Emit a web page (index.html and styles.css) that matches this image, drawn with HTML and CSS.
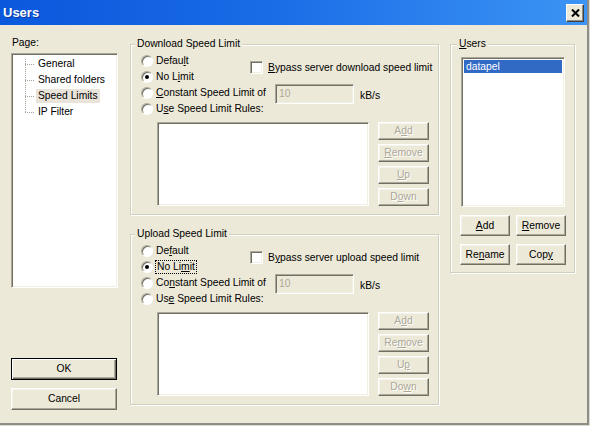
FILE: index.html
```html
<!DOCTYPE html>
<html>
<head>
<meta charset="utf-8">
<link rel="stylesheet" href="styles.css">
</head>
<body>
<div class="window">
  <div class="titlebar">
    <span class="title">Users</span>
    <span class="close"><svg width="9" height="8" viewBox="0 0 9 8"><path d="M1 0.5 L8 7.5 M8 0.5 L1 7.5" stroke="#000" stroke-width="2" fill="none"/></svg></span>
  </div>
  <div class="client">
    <div class="col-left">
      <div class="page-label">Page:</div>
      <div class="tree sunken">
        <div class="tree-inner">
          <svg class="tree-lines" width="11" height="64" viewBox="0 0 11 64" shape-rendering="crispEdges">
            <path d="M0.5 3 V56.5 M0 8.5 H9 M0 24.5 H9 M0 40.5 H9 M0 56.5 H9" stroke="#a3a39a" stroke-width="1" stroke-dasharray="1 1" fill="none"/>
          </svg>
          <ul class="tree-items">
            <li><span>General</span></li>
            <li><span>Shared folders</span></li>
            <li><span class="sel">Speed Limits</span></li>
            <li><span>IP Filter</span></li>
          </ul>
        </div>
      </div>
      <button class="btn btn-default btn-wide">OK</button>
      <button class="btn btn-wide btn-cancel">Cancel</button>
    </div>

    <div class="col-mid">
      <fieldset class="group">
        <legend>Download Speed Limit</legend>
        <div class="opts">
          <label class="radio-row r1"><span class="radio"></span><span>Defau<u>l</u>t</span></label>
          <label class="check-row"><span class="checkbox"></span><span><u>B</u>ypass server download speed limit</span></label>
          <label class="radio-row r2"><span class="radio on"></span><span>No L<u>i</u>mit</span></label>
          <label class="radio-row r3"><span class="radio"></span><span><u>C</u>onstant Speed Limit of</span></label>
          <span class="edit sunken">10</span>
          <span class="unit">kB/s</span>
          <label class="radio-row r4"><span class="radio"></span><span>U<u>s</u>e Speed Limit Rules:</span></label>
        </div>
        <div class="rules">
          <div class="rule-list sunken"></div>
          <div class="rule-btns">
            <button class="btn small" disabled>A<u>d</u>d</button>
            <button class="btn small" disabled><u>R</u>emove</button>
            <button class="btn small" disabled><u>U</u>p</button>
            <button class="btn small" disabled>D<u>o</u>wn</button>
          </div>
        </div>
      </fieldset>

      <fieldset class="group group-up">
        <legend>Upload Speed Limit</legend>
        <div class="opts">
          <label class="radio-row r1"><span class="radio"></span><span>De<u>f</u>ault</span></label>
          <label class="check-row"><span class="checkbox"></span><span>B<u>y</u>pass server upload speed limit</span></label>
          <label class="radio-row r2"><span class="radio on"></span><span class="focus">No Li<u>m</u>it</span></label>
          <label class="radio-row r3"><span class="radio"></span><span>Co<u>n</u>stant Speed Limit of</span></label>
          <span class="edit sunken">10</span>
          <span class="unit">kB/s</span>
          <label class="radio-row r4"><span class="radio"></span><span>Us<u>e</u> Speed Limit Rules:</span></label>
        </div>
        <div class="rules">
          <div class="rule-list sunken"></div>
          <div class="rule-btns">
            <button class="btn small" disabled>A<u>d</u>d</button>
            <button class="btn small" disabled>Re<u>m</u>ove</button>
            <button class="btn small" disabled>U<u>p</u></button>
            <button class="btn small" disabled>Do<u>w</u>n</button>
          </div>
        </div>
      </fieldset>
    </div>

    <div class="col-right">
      <fieldset class="group group-users">
        <legend><u>U</u>sers</legend>
        <div class="users-body">
          <div class="user-list sunken">
            <div class="user-item">datapel</div>
          </div>
          <div class="user-btns">
            <button class="btn"><u>A</u>dd</button>
            <button class="btn"><u>R</u>emove</button>
            <button class="btn">Re<u>n</u>ame</button>
            <button class="btn">Cop<u>y</u></button>
          </div>
        </div>
      </fieldset>
    </div>
  </div>
</div>
</body>
</html>
```

FILE: styles.css
```css
* { box-sizing: border-box; }
html, body { margin: 0; padding: 0; }
body {
  width: 590px;
  height: 426px;
  overflow: hidden;
  background: #ece9d8;
  font-family: "Liberation Sans", Arial, sans-serif;
  font-size: 10.3px;
  color: #000;
}
.window {
  width: 590px;
  height: 426px;
  background: #ece9d8;
  border-right: 1px solid #dddbd1;
  border-bottom: 1px solid #dddbd1;
  box-shadow: inset -2px -2px 0 #8f8e86;
  padding: 0 2px 2px 0;
  display: flex;
  flex-direction: column;
}
.titlebar {
  height: 25px;
  flex: none;
  display: flex;
  align-items: center;
  justify-content: space-between;
  padding: 0 3px 0 3px;
  background: linear-gradient(to right, #0a58dc 0%, #1a6be6 45%, #3c94f4 100%);
}
.title {
  color: #fff;
  font-weight: bold;
  font-size: 13px;
  text-shadow: 1px 1px 0 #0b3a9e;
}
.close {
  width: 18px;
  height: 18px;
  background: #ece9d8;
  border: 1px solid;
  border-color: #fff #404040 #404040 #fff;
  box-shadow: inset -1px -1px 0 #8f8e86;
  display: flex;
  align-items: center;
  justify-content: center;
}
.client {
  flex: 1;
  display: flex;
  padding-left: 11px;
}
.sunken {
  background: #fff;
  border: 1px solid;
  border-color: #aca899 #fff #fff #aca899;
  box-shadow: inset 1px 1px 0 #716f64, inset -1px -1px 0 #f1efe2;
}

/* left column */
.col-left {
  width: 107px;
  padding-top: 12px;
  display: flex;
  flex-direction: column;
}
.page-label { line-height: 12px; height: 12px; margin-bottom: 4px; padding-left: 1px; }
.tree { height: 235px; padding: 2px 0 0 2px; }
.tree-inner { display: flex; align-items: flex-start; padding-left: 11px; }
.tree-lines { flex: none; margin-top: 0; }
.tree-items { list-style: none; margin: 0; padding: 0; }
.tree-items li { height: 16px; display: flex; align-items: center; }
.tree-items li span { padding: 1px 2px; line-height: 12px; white-space: nowrap; }
.tree-items li span.sel { background: #e9e3da; }

.btn {
  font-family: inherit;
  font-size: 10.3px;
  color: #000;
  background: #ece9d8;
  border: 1px solid;
  border-color: #fff #716f64 #716f64 #fff;
  box-shadow: inset -1px -1px 0 #aca899, inset 1px 1px 0 #f6f4ea;
  padding: 0;
  margin: 0;
  border-radius: 0;
  line-height: 12px;
}
.btn:disabled {
  color: #aca899;
  text-shadow: 1px 1px 0 #fff;
}
.btn-wide { width: 106px; height: 22px; }
.btn-default {
  margin-top: 70px;
  border-color: #000;
  box-shadow: inset 1px 1px 0 #fff, inset -1px -1px 0 #716f64, inset -2px -2px 0 #aca899;
}
.btn-cancel { margin-top: 8px; }

/* middle column */
.col-mid {
  width: 309px;
  margin-left: 12px;
  padding-top: 13px;
  display: flex;
  flex-direction: column;
}
.group {
  margin: 0;
  padding: 3px 0 8px 4px;
  border: 1px solid #d0d0bf;
  box-shadow: inset 1px 1px 0 #fff, 1px 1px 0 #fff;
  min-width: 0;
}
.group legend {
  padding: 0 2px;
  line-height: 12px;
  background: #ece9d8;
}
.group-up { margin-top: 13px; }
.opts {
  margin-left: 6px;
  display: grid;
  grid-template-columns: 109px 25px 79px 1fr;
  grid-template-rows: repeat(4, 16px);
}
.radio-row {
  display: flex;
  align-items: center;
  gap: 3px;
  line-height: 12px;
  white-space: nowrap;
}
.r1 { grid-column: 1; grid-row: 1; }
.r2 { grid-column: 1; grid-row: 2; }
.r3 { grid-column: 1 / 3; grid-row: 3; }
.r4 { grid-column: 1 / 5; grid-row: 4; }
.radio {
  flex: none;
  width: 12px;
  height: 12px;
  border-radius: 50%;
  background: #fff;
  border: 1px solid;
  border-color: #aca899 #fff #fff #aca899;
  box-shadow: inset 1px 1px 0 #716f64;
  display: flex;
  align-items: center;
  justify-content: center;
}
.radio.on::after {
  content: "";
  width: 4px;
  height: 4px;
  border-radius: 50%;
  background: #000;
}
.check-row {
  grid-column: 2 / 5;
  grid-row: 1 / 3;
  align-self: start;
  margin-top: 8px;
  display: flex;
  align-items: center;
  gap: 5px;
  line-height: 12px;
  white-space: nowrap;
}
.checkbox {
  flex: none;
  width: 13px;
  height: 13px;
  background: #fff;
  border: 1px solid;
  border-color: #aca899 #fff #fff #aca899;
  box-shadow: inset 1px 1px 0 #716f64, inset -1px -1px 0 #f1efe2;
}
.edit {
  grid-column: 3;
  grid-row: 3;
  height: 20px;
  margin-top: -1px;
  background: #ece9d8;
  color: #aca899;
  line-height: 16px;
  padding: 1px 0 0 3px;
}
.unit {
  grid-column: 4;
  grid-row: 3;
  margin-left: 6px;
  padding-top: 5px;
  line-height: 12px;
}
.focus {
  outline: 1px dotted #000;
  outline-offset: 0;
  padding: 0 1px;
}
.rules {
  display: flex;
  gap: 9px;
  margin-top: 5px;
  margin-left: 22px;
}
.rule-list { width: 212px; height: 84px; }
.rule-btns { display: flex; flex-direction: column; gap: 4px; }
.btn.small { width: 51px; height: 18px; }

/* right column */
.col-right {
  width: 125px;
  margin-left: 11px;
  padding-top: 13px;
}
.group-users { padding: 7px 0 7px 6px; }
.users-body { margin-left: 4px; }
.user-list { width: 104px; height: 150px; padding: 2px 2px 0 2px; }
.user-item {
  background: #316ac5;
  color: #fff;
  height: 13px;
  line-height: 13px;
  padding-left: 2px;
}
.user-btns {
  margin-top: 8px;
  margin-left: -1px;
  display: grid;
  grid-template-columns: 50px 50px;
  grid-auto-rows: 21px;
  column-gap: 6px;
  row-gap: 8px;
}
.user-btns .btn { height: 21px; }
```
